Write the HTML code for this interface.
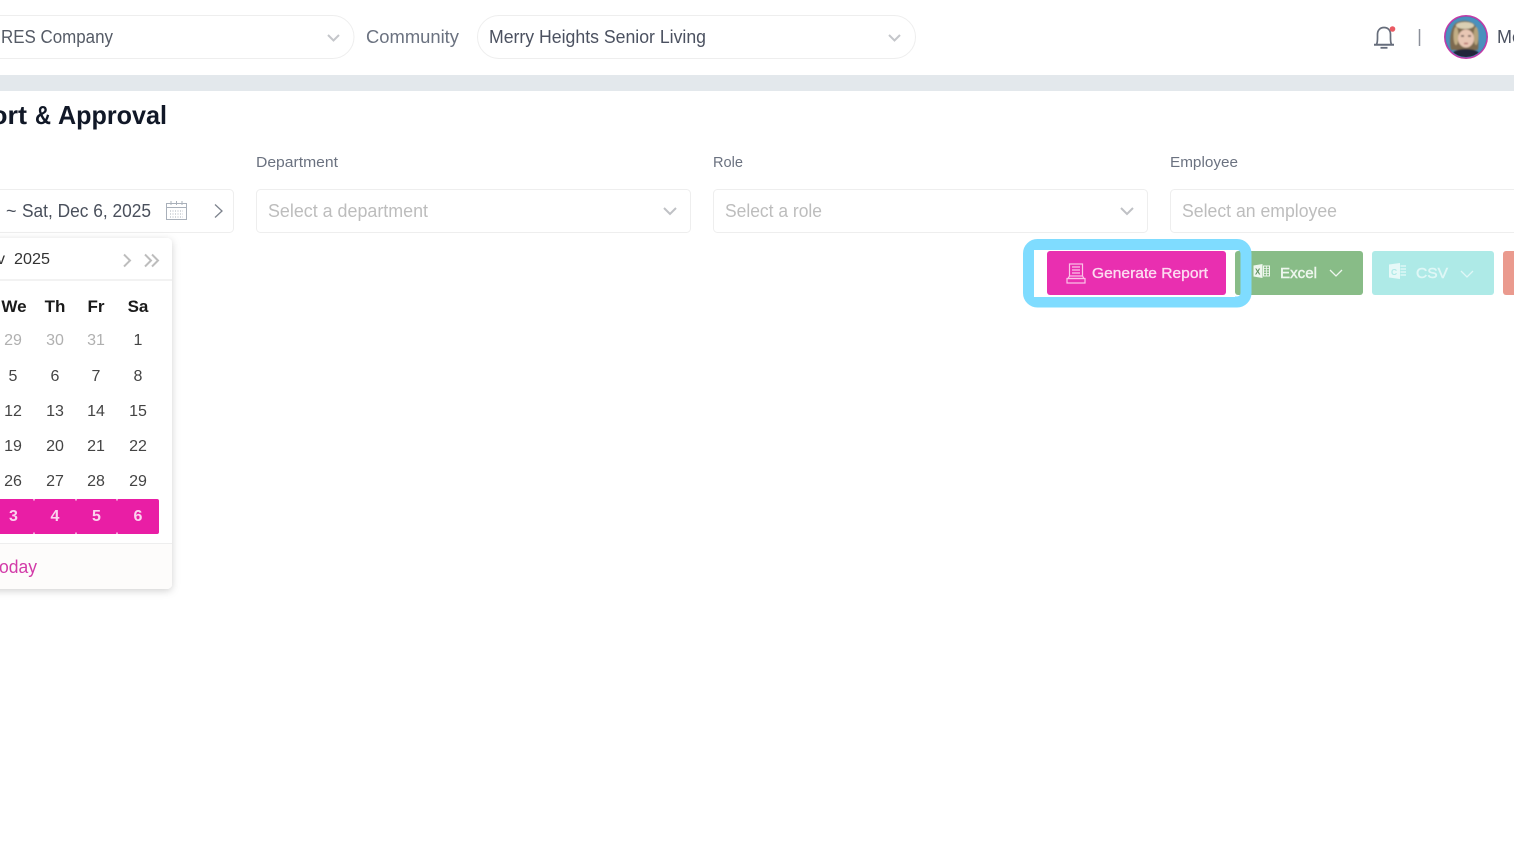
<!DOCTYPE html>
<html lang="en">
<head>
<meta charset="utf-8">
<title>Report &amp; Approval</title>
<style>
html,body{margin:0;padding:0;background:#fff;width:1514px;height:845px;overflow:hidden}
svg{display:block;position:absolute;left:0;top:0}
text{font-family:"Liberation Sans",sans-serif}
</style>
</head>
<body>
<svg width="1514" height="845" viewBox="0 0 1514 845" xmlns="http://www.w3.org/2000/svg">
<defs>
<filter id="sh" x="-20%" y="-20%" width="140%" height="140%"><feDropShadow dx="0" dy="2" stdDeviation="4" flood-color="#000" flood-opacity=".18"/></filter>
<filter id="bl"><feGaussianBlur stdDeviation=".8"/></filter>
<clipPath id="av"><circle cx="1466" cy="37" r="20"/></clipPath>
</defs>
<rect width="1514" height="845" fill="#fff"/>
<rect x="0" y="75" width="1514" height="16" fill="#e3e8ec"/>

<!-- top selects -->
<rect x="-60" y="15.500" width="414" height="43" rx="21.500" fill="#fff" stroke="#eeeeee"/>
<text x="1" y="43" font-size="18" fill="#555b66" textLength="112" lengthAdjust="spacingAndGlyphs">RES Company</text>
<path d="M328 35l5.500 5.500 5.500-5.500" fill="none" stroke="#c4c6ca" stroke-width="2"/>
<text x="366" y="43" font-size="18" fill="#6b7280" textLength="93" lengthAdjust="spacingAndGlyphs">Community</text>
<rect x="477.500" y="15.500" width="438" height="43" rx="21.500" fill="#fff" stroke="#eeeeee"/>
<text x="489" y="43" font-size="18" fill="#4b5160" textLength="217" lengthAdjust="spacingAndGlyphs">Merry Heights Senior Living</text>
<path d="M889 35l5.500 5.500 5.500-5.500" fill="none" stroke="#c4c6ca" stroke-width="2"/>

<!-- bell -->
<path d="M1376.500 44.500c.8-1.500 1-3.500 1-6.500v-3.500c0-4.500 2.800-7 6.500-7s6.500 2.500 6.500 7v3.500c0 3 .2 5 1 6.500" fill="none" stroke="#666d7b" stroke-width="1.700"/>
<path d="M1374 44.800h20" stroke="#666d7b" stroke-width="2"/>
<path d="M1380.500 47.800h7" stroke="#666d7b" stroke-width="1.800"/>
<circle cx="1392.500" cy="29" r="2.800" fill="#ea5a63"/>
<path d="M1419.500 29v17" stroke="#8a8f99" stroke-width="1.500"/>

<!-- avatar -->
<circle cx="1466" cy="37" r="22" fill="#c23aa8"/>
<circle cx="1466" cy="37" r="20.500" fill="#3f86b5"/>
<g clip-path="url(#av)">
<rect x="1445" y="16" width="42" height="42" fill="#4a90bd"/>
<g filter="url(#bl)">
<path d="M1451 50c-2-8-1-22 5-27 5-3 13-3 18 1 5 6 5 18 4 26z" fill="#7d6b50"/>
<ellipse cx="1465" cy="25.500" rx="9" ry="3.500" fill="#d9cfb3"/>
<ellipse cx="1456" cy="36" rx="2.500" ry="9" fill="#c2ae85"/>
<ellipse cx="1476" cy="36" rx="2.500" ry="9" fill="#b5a27a"/>
<ellipse cx="1466" cy="38.500" rx="8" ry="9" fill="#e8c6b4"/>
<path d="M1461 36h3M1468 36h3" stroke="#5e4f4b" stroke-width="1.500"/>
<path d="M1464 43.500h4" stroke="#b5706c" stroke-width="1.500"/>
<path d="M1450 58c1-7 8-9 16-9s14 2 16 9z" fill="#23273a"/>
</g>
</g>
<text x="1497" y="43" font-size="18" fill="#4b5160">Me</text>

<!-- heading -->
<g font-size="26" font-weight="700" fill="#111827">
<text x="-9" y="124" textLength="36" lengthAdjust="spacingAndGlyphs">ort</text>
<text x="35" y="124" textLength="16" lengthAdjust="spacingAndGlyphs">&amp;</text>
<text x="58" y="124" textLength="109" lengthAdjust="spacingAndGlyphs">Approval</text>
</g>

<!-- labels -->
<text x="256" y="167" font-size="15" fill="#6b7280" textLength="82" lengthAdjust="spacingAndGlyphs">Department</text>
<text x="713" y="167" font-size="15" fill="#6b7280" textLength="30" lengthAdjust="spacingAndGlyphs">Role</text>
<text x="1170" y="167" font-size="15" fill="#6b7280" textLength="68" lengthAdjust="spacingAndGlyphs">Employee</text>

<!-- inputs -->
<rect x="-20" y="189.500" width="253.500" height="43" rx="4" fill="#fff" stroke="#eeeeee"/>
<text x="6" y="217" font-size="18" fill="#4a505c">~</text>
<text x="22" y="217" font-size="18" fill="#4a505c" textLength="129" lengthAdjust="spacingAndGlyphs">Sat, Dec 6, 2025</text>
<g fill="none" stroke="#a9b0ba" stroke-width="1">
<rect x="166.500" y="203.500" width="20" height="16"/>
<path d="M166.500 207.500h20M171 201v4M176.500 201v4M182 201v4"/>
<path d="M170 211h13M170 214h13M170 217h13" stroke-dasharray="1 1.500"/>
</g>
<path d="M215 204.500l7 6.500-7 6.500" fill="none" stroke="#7d838d" stroke-width="1.300"/>

<rect x="256.500" y="189.500" width="434" height="43" rx="4" fill="#fff" stroke="#eeeeee"/>
<text x="268" y="217" font-size="18" fill="#bdbdbd" textLength="160" lengthAdjust="spacingAndGlyphs">Select a department</text>
<path d="M664 208l6 6 6-6" fill="none" stroke="#bfc1c5" stroke-width="2"/>

<rect x="713.500" y="189.500" width="434" height="43" rx="4" fill="#fff" stroke="#eeeeee"/>
<text x="725" y="217" font-size="18" fill="#bdbdbd" textLength="97" lengthAdjust="spacingAndGlyphs">Select a role</text>
<path d="M1121 208l6 6 6-6" fill="none" stroke="#bfc1c5" stroke-width="2"/>

<rect x="1170.500" y="189.500" width="400" height="43" rx="4" fill="#fff" stroke="#eeeeee"/>
<text x="1182" y="217" font-size="18" fill="#bdbdbd" textLength="155" lengthAdjust="spacingAndGlyphs">Select an employee</text>

<!-- calendar panel -->
<rect x="-30" y="238" width="202" height="351" rx="5" fill="#fff" filter="url(#sh)"/>
<path d="M-30 280h202" stroke="#eeeeee" stroke-width="1.500"/>
<text x="-3" y="264" font-size="16" fill="#333">v</text>
<text x="14" y="264" font-size="16" fill="#333" textLength="36" lengthAdjust="spacingAndGlyphs">2025</text>
<path d="M124 254.500l6 6-6 6" fill="none" stroke="#bdbdbd" stroke-width="2"/>
<path d="M145 254.500l6 6-6 6M152 254.500l6 6-6 6" fill="none" stroke="#bdbdbd" stroke-width="2"/>

<g font-size="17" font-weight="700" fill="#1a1a1a" text-anchor="middle">
<text x="14" y="312">We</text><text x="55" y="312">Th</text><text x="96" y="312">Fr</text><text x="138" y="312">Sa</text>
</g>
<g font-size="16" text-anchor="middle" fill="#b0b0b0">
<text x="13" y="345">29</text><text x="55" y="345">30</text><text x="96" y="345">31</text>
</g>
<g font-size="16" text-anchor="middle" fill="#444">
<text x="138" y="345">1</text>
<text x="13" y="381">5</text><text x="55" y="381">6</text><text x="96" y="381">7</text><text x="138" y="381">8</text>
<text x="13" y="416">12</text><text x="55" y="416">13</text><text x="96" y="416">14</text><text x="138" y="416">15</text>
<text x="13" y="451">19</text><text x="55" y="451">20</text><text x="96" y="451">21</text><text x="138" y="451">22</text>
<text x="13" y="486">26</text><text x="55" y="486">27</text><text x="96" y="486">28</text><text x="138" y="486">29</text>
</g>
<path d="M-30 499H157a2 2 0 0 1 2 2V532a2 2 0 0 1-2 2H-30Z" fill="#e91ea5"/>
<path d="M34 499v1.500M76 499v1.500M117 499v1.500M34 532.500v1.500M76 532.500v1.500M117 532.500v1.500" stroke="#fff" stroke-width="1.200"/>
<g font-size="16" font-weight="700" text-anchor="middle" fill="#fbd3ee">
<text x="13.500" y="521">3</text><text x="55" y="521">4</text><text x="96.500" y="521">5</text><text x="138" y="521">6</text>
</g>
<path d="M-30 544H172V584a5 5 0 0 1-5 5H-30Z" fill="#fdfcfb"/>
<path d="M-30 543.500H172" stroke="#eeeeee"/>
<text x="-1" y="573" font-size="18" fill="#d23aa8" textLength="38" lengthAdjust="spacingAndGlyphs">oday</text>

<!-- buttons -->
<rect x="1235" y="251" width="128" height="44" rx="3" fill="#88bc87"/>
<rect x="1372" y="251" width="122" height="44" rx="3" fill="#aeeae7"/>
<rect x="1503" y="251" width="30" height="44" rx="3" fill="#ea9a8e"/>

<!-- excel icon -->
<path d="M1253.500 265.500l9-1.500v14l-9-1.500z" fill="#eef6ee"/>
<rect x="1263.500" y="266" width="6" height="10" fill="none" stroke="#eef6ee" stroke-width="1"/>
<path d="M1263.500 268.500h6M1263.500 271h6M1263.500 273.500h6M1266.500 266v10" stroke="#eef6ee" stroke-width=".8"/>
<text x="1255" y="274.500" font-size="8" font-weight="700" fill="#5f8f5e">X</text>
<text x="1280" y="278" font-size="15" fill="#eef6ee" stroke="#eef6ee" stroke-width=".45" textLength="37" lengthAdjust="spacingAndGlyphs">Excel</text>
<path d="M1330 270l6 6 6-6" fill="none" stroke="#eef6ee" stroke-width="1.300"/>

<!-- csv icon -->
<path d="M1389 264.500l11-1.500v16l-11-1.500z" fill="#e6f9f8"/>
<path d="M1400.500 266h5.500M1400.500 269h5.500M1400.500 272h5.500M1400.500 275h5.500" stroke="#e6f9f8" stroke-width="1.300"/>
<text x="1391" y="275" font-size="8.500" font-weight="700" fill="#aeeae7">C</text>
<text x="1416" y="278" font-size="15" fill="#dff7f6" stroke="#dff7f6" stroke-width=".45" textLength="32" lengthAdjust="spacingAndGlyphs">CSV</text>
<path d="M1461 271l6 6 6-6" fill="none" stroke="#dff7f6" stroke-width="1.300"/>

<!-- highlight -->
<rect x="1028.500" y="244.500" width="217.500" height="57.500" rx="9" fill="none" stroke="#7fdcff" stroke-width="11"/>
<rect x="1034" y="250" width="201" height="47" fill="#fff"/>
<rect x="1047" y="251" width="179" height="44" rx="3" fill="#e92fb0"/>
<g fill="none" stroke="#fbc4e8" stroke-width="1.200">
<rect x="1069.500" y="264" width="13" height="12"/>
<path d="M1072 267h8M1072 270h8M1072 273h8"/>
<path d="M1069.500 276l-1.500 2.500h16l-1.500-2.500"/>
<rect x="1067" y="278.500" width="18" height="4.500"/>
</g>
<text x="1092" y="278" font-size="15" fill="#fcdcf1" stroke="#fcdcf1" stroke-width=".35" textLength="116" lengthAdjust="spacingAndGlyphs">Generate Report</text>
</svg>
</body>
</html>
